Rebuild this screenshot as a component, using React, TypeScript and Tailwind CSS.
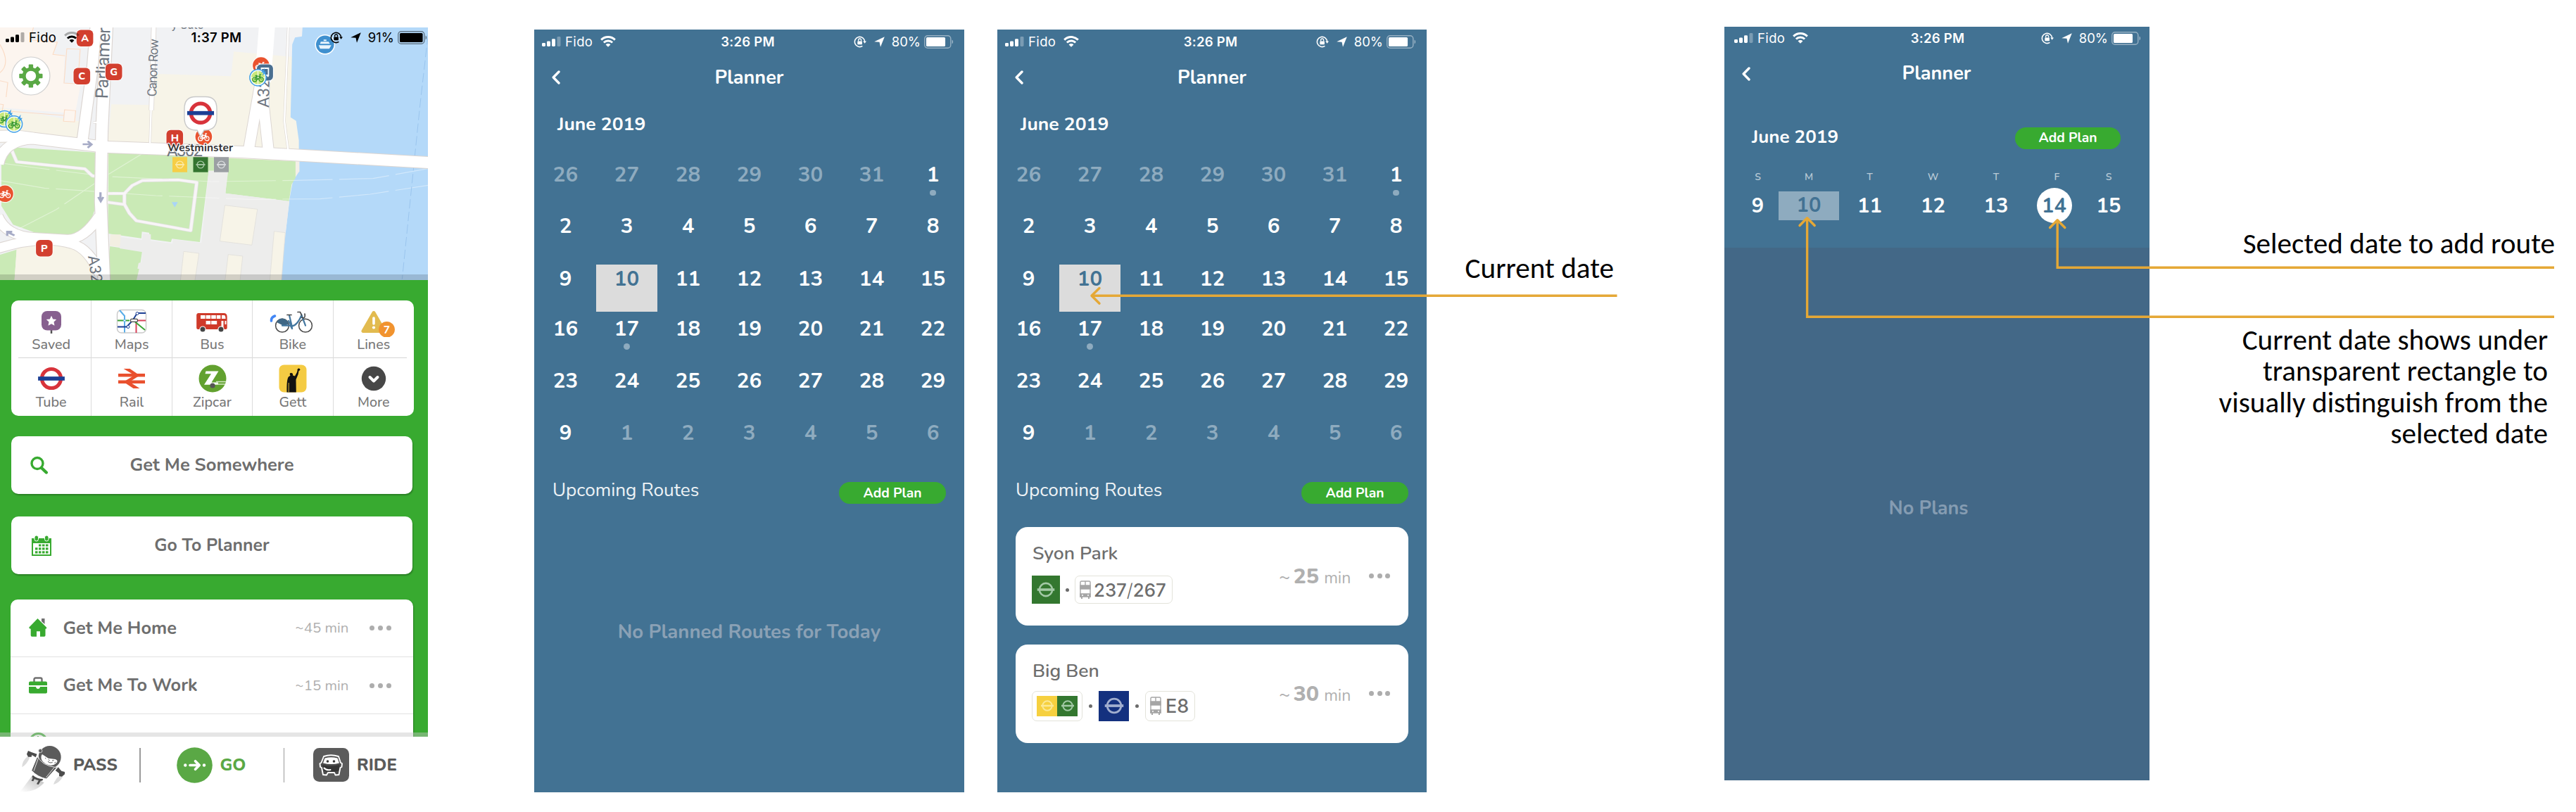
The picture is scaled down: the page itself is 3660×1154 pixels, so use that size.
import type { ReactNode } from 'react';

/* ---------- status bar ---------- */

function Signal() {
  return (
    <svg className="h-[14px] w-[27px]" viewBox="0 0 27 14" fill="currentColor">
      <rect x="0" y="9" width="5" height="5" rx="1.4" />
      <rect x="7" y="6.5" width="5" height="7.5" rx="1.4" />
      <rect x="14" y="3.2" width="5" height="10.8" rx="1.4" />
      <rect x="21.5" y="0" width="5" height="14" rx="1.4" opacity="0.3" />
    </svg>
  );
}

function Wifi({ weak = false }: { weak?: boolean }) {
  return (
    <svg className="h-[16px] w-[22px]" viewBox="0 0 22 16" fill="none" stroke="currentColor" strokeWidth="3">
      <path d="M1.2 5.6C6.7.2 15.3.2 20.8 5.6" opacity={weak ? 0.3 : 1} />
      <path d="M4.9 9.5c3.4-3.3 8.8-3.3 12.2 0" />
      <path d="M11 15.8 7.6 12.4c1.9-1.8 4.9-1.8 6.8 0Z" fill="currentColor" stroke="none" />
    </svg>
  );
}

function RotationLock() {
  return (
    <svg className="h-[17px] w-[18px]" viewBox="0 0 18 17" fill="none" stroke="currentColor">
      <path d="M15.6 8.2A7.1 7.1 0 1 0 12.4 14.4" strokeWidth="1.6" />
      <path d="M13.2 7.6h4.8l-2.4 3.2z" fill="currentColor" stroke="none" />
      <rect x="5.3" y="7.4" width="6.6" height="4.8" rx="0.6" fill="currentColor" stroke="none" />
      <path d="M6.6 7.6V6a2 2 0 0 1 4 0v1.6" strokeWidth="1.3" />
    </svg>
  );
}

function LocationArrow() {
  return (
    <svg className="h-[15px] w-[15px]" viewBox="0 0 15 15" fill="currentColor">
      <path d="M14.8.2 9 14.8 7.5 7.8.2 7.2z" />
    </svg>
  );
}

function Battery({ level }: { level: number }) {
  return (
    <svg className="h-[19px] w-[42px]" viewBox="0 0 42 19" fill="none">
      <rect x="0.8" y="0.8" width="37" height="17.4" rx="4.2" stroke="currentColor" strokeWidth="1.4" opacity="0.45" />
      <path d="M39.6 6.6c2 .8 2 5 0 5.8z" fill="currentColor" opacity="0.5" />
      <rect x="3" y="3" width={32.6 * level} height="13" rx="1.6" fill="currentColor" />
    </svg>
  );
}

function StatusBar({ time, charge, level, weak, className }: { time: string; charge: string; level: number; weak?: boolean; className: string }) {
  return (
    <div className={'grid w-full grid-cols-[1fr_auto_1fr] items-center font-["Inter",sans-serif] text-[18.5px] leading-none ' + className}>
      <div className="flex items-center">
        <Signal />
        <span className="ml-[6px] mr-[11px] tracking-[0.02em]">Fido</span>
        <Wifi weak={weak} />
      </div>
      <span className="font-semibold tracking-[0.015em]">{time}</span>
      <div className="flex items-center justify-end">
        <RotationLock />
        <span className="ml-[11px] mr-[10px]"><LocationArrow /></span>
        <span className="mr-[5px]">{charge}</span>
        <Battery level={level} />
      </div>
    </div>
  );
}

/* ---------- map ---------- */

function BusStop({ x, y, label }: { x: number; y: number; label: string }) {
  return (
    <g transform={`translate(${x} ${y})`}>
      <rect x="-12.8" y="-12.8" width="25.6" height="25.6" rx="7" fill="#fff" opacity="0.85" />
      <rect x="-11.8" y="-11.8" width="23.6" height="23.6" rx="6" fill="#d23f2f" />
      <text y="4.8" textAnchor="middle" fontFamily="Nunito, Lato, sans-serif" fontWeight="800" fontSize="14.5" fill="#fff">{label}</text>
    </g>
  );
}

function BikeGlyph({ color }: { color: string }) {
  return (
    <g fill="none" stroke={color} strokeWidth="1.2" strokeLinecap="round">
      <circle cx="-4.6" cy="2.6" r="3" />
      <circle cx="4.6" cy="2.6" r="3" />
      <path d="M-4.6 2.6-2.4-2.2 0 2.6h-4.6M0 2.6l3-4.6H-2.2M3-2l1.6 4.6M3-2 2.6-4.4h1.6M-3.6-3h2.4" />
    </g>
  );
}

function BikeDock({ x, y }: { x: number; y: number }) {
  return (
    <g transform={`translate(${x} ${y})`}>
      <circle r="13" fill="#fff" opacity="0.8" />
      <circle r="11.8" fill="#e9532f" />
      <BikeGlyph color="#fff" />
    </g>
  );
}

function EBike({ x, y }: { x: number; y: number }) {
  return (
    <g transform={`translate(${x} ${y})`}>
      <circle r="11.6" fill="#fff" stroke="#3f9fe6" strokeWidth="1.5" />
      <circle r="9.6" fill="#c9e87c" />
      <path d="M-9.6 0h19.2M0-9.6v19.2" stroke="#fff" strokeWidth="1" />
      <BikeGlyph color="#3a9a35" />
      <path d="M9.5-13.5 4.6-7h3.2L6-2.4 12-8.6H8.8z" fill="#3f9fe6" />
    </g>
  );
}

function Roundel({ ring, bar, r = 13.5, w = 5.4 }: { ring: string; bar: string; r?: number; w?: number }) {
  return (
    <g>
      <circle r={r} fill="#fff" stroke={ring} strokeWidth={w} />
      <rect x={-r * 1.4} y={-r * 0.21} width={r * 2.8} height={r * 0.42} fill={bar} />
    </g>
  );
}

function LineRoundel({ tint, scale = 1 }: { tint: string; scale?: number }) {
  return (
    <g transform={`scale(${scale})`} fill="none" stroke={tint}>
      <circle r="9.3" strokeWidth="2.6" />
      <path d="M-12.5 0h25" strokeWidth="3.6" />
    </g>
  );
}

const GEAR_TEETH = [0, 45, 90, 135, 180, 225, 270, 315];

function CityMap() {
  return (
    <svg className="absolute inset-0 h-[359px] w-[608px]" viewBox="0 39 608 359">
      <g transform="translate(0 20) scale(0.39541 0.33333)">
        <rect x="0" y="57" width="1538" height="1080" fill="#f1f2f4" />
        <path d="M400 385 545 388 560 255 830 265 840 160 1090 187 1080 640H380ZM0 400l300 60-20 90H0Z" fill="#f7f4e8" />
        <path d="M0 57h120l-12 50 100 12-16 50 40 10-4 116 62 4-18 112 0 48-40-3 0-35L0 398Z" fill="#fcf5ef" />
        <g fill="none" stroke="#fbdcc6" strokeWidth="3">
          <path d="M120 57 108 110 206 120 190 172 234 178M240 148l48 2-8 148-50-4ZM232 408l40 4-4 48-40-3ZM0 384l12 2-4 26 222 20M0 284l28 8-6 62" />
          <path d="M0 130q20 40 20 70t-20 50" />
        </g>
        <path d="M1087 57h451v1080H1007l33-347 12-75 22-45V540l-10-85-20-15 6-310 10-30 25-5Z" fill="#b4d9f9" />
        <path d="M1063 600h13v70l-24 40Z" fill="#f4efe6" />
        <path d="M45 568 345 590v230l-28 90-50 32-140-10-80-34-42-80V640ZM390 590l672 38v70l-14 28-10 72-228-34 8-96h-68l-32 304-100-14-4 14-76-12-2-28-26-4-2 28-120-20ZM395 990l116 20-16 127H385ZM0 1026l60-22-8 133H0Z" fill="#caeab6" />
        <path d="M60 1000q100-30 210-14l55 60 10 90H52Z" fill="#f7f4e8" />
        <path d="M396 940h38v54l-40-6Z" fill="#f3efe2" />
        <path d="M750 668h70l-10 96 230 34-14 134-40-7-16 212H490l10-50-6-2 4-24 10-2 4-44-82-16 4-48 76 12 4-28 28 4 0 28 78 12 2-18 102 15Z" fill="#ededec" />
        <g fill="#f7f4e8" stroke="#dedcd8" strokeWidth="2">
          <path d="M808 815 925 832 905 985 790 968ZM660 1012l55 8-15 120h-52ZM820 1025l52 7-10 110h-54ZM985 926l40 6-14 210h-42Z" />
        </g>
        <g fill="none" stroke="#e4e2e4" strokeWidth="14" strokeLinejoin="round">
          <path d="M40 575 60 630 305 660 332 690 350 692M385 765h62l28-34 36-21 130-3 66 11-22 205-195-42-25-32-18-38v-46M385 802l62 10" />
        </g>
        <g fill="none" stroke="#f8f5f7" strokeWidth="10" strokeLinejoin="round">
          <path d="M40 575 60 630 305 660 332 690 350 692M385 765h62l28-34 36-21 130-3 66 11-22 205-195-42-25-32-18-38v-46M385 802l62 10" />
        </g>
        <path d="M0 635l140 22 240 35 380 22 300-5 280-8 198-42M0 710l160 32 400 32 340 16 250-2 180-20 208-38M60 920 200 835 380 690 560 560" fill="none" stroke="#fff" strokeOpacity="0.4" strokeWidth="3.5" strokeDasharray="180 24" />
        <path d="M1538 90 1510 380 1445 1130" fill="none" stroke="#98c3ec" strokeWidth="2.5" strokeDasharray="40 14" />
        <g fill="none" stroke="#dcd6d2" strokeLinejoin="round">
          <path d="M-10 522q70-6 130 8l250 36 500 22 680 46" strokeWidth="54" />
          <path d="M384 40 366 500l-4 300 12 340" strokeWidth="48" />
          <path d="M345 40 332 230 296 540" strokeWidth="44" />
          <path d="M120 534Q10 540-6 640M-10 860q30 86 130 92l120 8q60 4 118-100M-10 1000q160-60 270-20 60 20 100 130" strokeWidth="44" />
          <path d="M960 40 935 300 892 590M950 250l-4 130 20 220" strokeWidth="43" />
          <path d="M553 40 544 410" strokeWidth="19" />
          <path d="M543 400l-4 150M1036 57l-14 400 14 130M335 462h20" strokeWidth="9" />
        </g>
        <g fill="none" stroke="#fff" strokeLinejoin="round">
          <path d="M-10 522q70-6 130 8l250 36 500 22 680 46" strokeWidth="48" />
          <path d="M384 40 366 500l-4 300 12 340" strokeWidth="42" />
          <path d="M345 40 332 230 296 540" strokeWidth="38" />
          <path d="M120 534Q10 540-6 640M-10 860q30 86 130 92l120 8q60 4 118-100M-10 1000q160-60 270-20 60 20 100 130" strokeWidth="38" />
          <path d="M960 40 935 300 892 590M950 250l-4 130 20 220" strokeWidth="38" />
          <path d="M960 40 944 290" strokeWidth="58" />
          <path d="M553 40 544 410" strokeWidth="15" />
          <path d="M543 400l-4 150M1036 57l-14 400 14 130M335 462h20" strokeWidth="6" />
        </g>
        <path d="M617 802h22l-11 22Z" fill="#a9d4f7" />
        <g fill="none" stroke="#a6abc6" strokeWidth="8">
          <path d="M297 555h28M315 542l14 14-14 14M361 760v32M353 780l9 18 9-18M52 944 28 930M26 946v-18h18" />
        </g>
      </g>

      {/* street names */}
      <g fontFamily="Roboto, sans-serif" fill="#6f7680">
        <text transform="translate(153 140.500) rotate(-88)" fontSize="25" textLength="101">Parliamer</text>
        <text transform="translate(222 137.500) rotate(-88)" fontSize="18" textLength="82">Canon Row</text>
        <text transform="translate(382 153) rotate(-89)" fontSize="23">A32</text>
        <text transform="translate(125 364) rotate(82)" fontSize="22">A32</text>
        <text x="237" y="222" fontSize="24" textLength="51">A302</text>
      </g>
      <text x="244" y="41" fontFamily="Roboto, sans-serif" fontSize="16" fill="#6f7680">y Gate</text>

      {/* markers */}
      <g transform="translate(461.800 63.300)">
        <circle r="14.300" fill="#fff" />
        <circle r="12.800" fill="#3f90cf" />
        <path d="M-9 1h18l-3 5H-7ZM-7-1l1-3H5l2 3ZM-2-5h4v-2h-4Z" fill="#e9f4fc" />
      </g>
      <BikeDock x={370.9} y={93} />
      <g transform="translate(376.400 103)">
        <rect x="-12.500" y="-12.500" width="25" height="25" rx="7" fill="#fff" />
        <rect x="-11.500" y="-11.500" width="23" height="23" rx="6" fill="#4a6f90" />
        <path d="M-5-6h10v10h-10ZM-5 6l2-2M5 6 3 4" fill="none" stroke="#fff" strokeWidth="1.800" />
      </g>
      <EBike x={366.5} y={110.3} />
      <EBike x={6.3} y={169} />
      <EBike x={20} y={176.3} />
      <BikeDock x={7} y={275.3} />
      <BusStop x={120.6} y={54.3} label="A" />
      <BusStop x={116.3} y={108.3} label="C" />
      <BusStop x={161.7} y={102.3} label="G" />
      <BusStop x={62.9} y={352.7} label="P" />
      <BusStop x={248.3} y={196.5} label="H" />
      <BikeDock x={289.4} y={194.3} />

      {/* station pin */}
      <path d="M278 137.500h14q16 0 16 17v13q0 17-16 17.500h-2l-5 9-5-9h-2q-16-.5-16-17.500v-13q0-17 16-17Z" fill="#fff" stroke="#c9c9c9" strokeWidth="1.400" />
      <g transform="translate(285 160.700)"><Roundel ring="#d8333b" bar="#1c3f94" r={13.6} /></g>
      <text x="284.500" y="215.300" textAnchor="middle" textLength="93" fontFamily="Nunito, Lato, sans-serif" fontWeight="700" fontSize="15.500" fill="#333" stroke="#fff" strokeWidth="2.500" paintOrder="stroke">Westminster</text>
      <g transform="translate(255.500 234)"><rect x="-10.500" y="-10.700" width="21" height="21.400" fill="#f6ce46" /><LineRoundel tint="#fbe9a8" scale={0.52} /></g>
      <g transform="translate(285 234)"><rect x="-10.500" y="-10.700" width="21" height="21.400" fill="#33742f" /><LineRoundel tint="#a5c8a3" scale={0.52} /></g>
      <g transform="translate(314.500 234)"><rect x="-10.500" y="-10.700" width="21" height="21.400" fill="#9b9fa3" /><LineRoundel tint="#d9dbdd" scale={0.52} /></g>

      {/* settings */}
      <g transform="translate(43.900 108)">
        <circle r="27" fill="#fff" stroke="#cfcfcf" strokeWidth="1.200" />
        {GEAR_TEETH.map((a) => (
          <rect key={a} x="-3.200" y="-16.600" width="6.400" height="7" rx="1" fill="#5aa845" transform={`rotate(${a})`} />
        ))}
        <circle r="9.800" fill="#fff" stroke="#5aa845" strokeWidth="5" />
      </g>
    </svg>
  );
}

/* ---------- home screen ---------- */

function SavedIcon() {
  return (
    <g>
      <path d="M0 13v5" stroke="#555" strokeWidth="2.500" />
      <rect x="-14" y="-14" width="28" height="27.500" rx="8" fill="#87608f" />
      <path d="M0-7.200 2.200-2.500 7.200-1.900 3.500 1.600 4.500 6.700 0 4.200-4.500 6.700-3.500 1.600-7.200-1.900-2.200-2.500Z" fill="#fff" />
    </g>
  );
}

function MapsIcon() {
  return (
    <g fill="none">
      <rect x="-20.500" y="-15.500" width="41" height="32.500" rx="6" fill="#fff" stroke="#c9c9c9" strokeWidth="1.400" />
      <g strokeWidth="2">
        <path d="M-20-.5H-3" stroke="#3ba336" />
        <path d="M5-.5h15M6.500 1v16" stroke="#d8435a" />
        <path d="M5 1.500 19 13" stroke="#3ba336" />
        <path d="M-17-15-10-7V16.500" stroke="#5aaee8" />
        <path d="M-20 8.500h13L1 0l7-11h12" stroke="#1c3f94" />
      </g>
      <rect x="-1.500" y="-2.600" width="10" height="4" rx="1.500" fill="#fff" stroke="#444" strokeWidth="1.200" />
      <circle cx="8" cy="-10.500" r="2" fill="#fff" stroke="#1c3f94" />
      <circle cx="-5" cy="8.500" r="2" fill="#fff" stroke="#1c3f94" />
      <circle cx="-10" cy="-.5" r="1.600" fill="#fff" stroke="#5aaee8" />
    </g>
  );
}

function BusIcon() {
  return (
    <g>
      <path d="M-19.500-11H17q4.500 0 4.700 5V10q0 2-2 2h-39.500q-2 0-2-2V-8.500Q-21.500-11-19.500-11Z" fill="#cf3a2a" />
      <g fill="#fff">
        <rect x="-16" y="-8" width="6.600" height="5" /><rect x="-8.400" y="-8" width="6.600" height="5" />
        <rect x="-.8" y="-8" width="6.600" height="5" /><rect x="6.800" y="-8" width="5.600" height="5" />
        <rect x="-8.400" y="0" width="6.600" height="5" /><rect x="-.8" y="0" width="8" height="5" />
        <path d="M14-8h4q1.500 1 1.500 5H14ZM13.500 0h3v9h-3ZM18.500 0h2v5h-2Z" />
      </g>
      <circle cx="-13" cy="12" r="4.600" fill="#fff" /><circle cx="13" cy="12" r="4.600" fill="#fff" />
      <circle cx="-13" cy="12" r="3.500" fill="#444" /><circle cx="13" cy="12" r="3.500" fill="#444" />
    </g>
  );
}

function BikeIcon() {
  return (
    <g fill="none" strokeLinecap="round">
      <path d="M-30.500 0Q-31-5-25.500-7" stroke="#4287f5" strokeWidth="3.600" />
      <circle cx="-15" cy="6.700" r="9.400" stroke="#4a4a4a" strokeWidth="1.500" />
      <circle cx="18" cy="6.700" r="9.400" stroke="#4a4a4a" strokeWidth="1.500" />
      <path d="M-23 2q3-6 9-5.500Q-7-2.500-6 5l-7 2Z" fill="#3f6785" />
      <g stroke="#43779f" strokeWidth="2.200">
        <path d="M-15 6.700H-1.500L-5-8M-1.500 7.500Q6 7 12.500-8L18 6.700M-6 0 -1 9" />
      </g>
      <path d="M-8-8.500h6M12.500-8 10.500-12.500H7M17-10q1 5-1.500 6l-3-1" stroke="#4a4a4a" strokeWidth="1.700" />
      <path d="M-3 7-1 11" stroke="#43779f" strokeWidth="2.500" />
    </g>
  );
}

function LinesIcon() {
  return (
    <g>
      <path d="M0-11.500-15 14.500H15Z" fill="#e2bb4f" stroke="#e2bb4f" strokeWidth="5" strokeLinejoin="round" />
      <path d="M0-4v8" stroke="#fff" strokeWidth="3.600" strokeLinecap="round" />
      <circle cx="0" cy="9.500" r="2.100" fill="#fff" />
      <circle cx="18.500" cy="12.300" r="11.400" fill="#f1932f" />
      <text x="18.500" y="17.500" textAnchor="middle" fontFamily="Nunito, Lato, sans-serif" fontWeight="700" fontSize="15.500" fill="#fff">7</text>
    </g>
  );
}

function RailIcon() {
  return (
    <g stroke="#e9502e" fill="none">
      <path d="M-19-4.800H19M-19 4.800H19" strokeWidth="4.600" />
      <path d="M-11.500-14h9L11.500-4.500-3 4.800 11.500 14h-9L-11.500 4.800 4-4.800Z" fill="#e9502e" stroke="none" />
    </g>
  );
}

function ZipcarIcon() {
  return (
    <g>
      <circle cx="1" r="19.500" fill="#62a12f" />
      <path d="M-8.500-10.500H9.500L-.500 5.500H9V8.800H-11L-1-6.700H-9.500Z" fill="#fff" />
      <path d="M6 4.500h14M6 8h13" stroke="#d4e8c4" strokeWidth="1.400" />
      <circle cx="1" cy="10" r="3.600" fill="#555" />
    </g>
  );
}

function GettIcon() {
  return (
    <g>
      <rect x="-19.500" y="-19.500" width="39" height="39" rx="7" fill="#f4cb43" />
      <path d="M-8.500 19.500Q-9 1-6-2.500l2.500-1.800Q-5.500-7.700-2.500-8 .8-8 0-4.500L3-3.500 6-9l1-4.500 2 .3Q8.500-6 4.500 1.500L4.800 19.500Z" fill="#111" />
      <circle cx="8.500" cy="-12.800" r="1.800" fill="#111" />
      <path d="M-5.800 19.500V6" stroke="#f4cb43" strokeWidth="0.900" />
    </g>
  );
}

function MoreIcon() {
  return (
    <g>
      <circle r="17.200" fill="#474747" />
      <path d="M-5.500-2 0 3.500 5.500-2" fill="none" stroke="#fff" strokeWidth="4" strokeLinecap="round" strokeLinejoin="round" />
    </g>
  );
}

const SERVICES: { label: string; icon: ReactNode }[] = [
  { label: 'Saved', icon: <SavedIcon /> },
  { label: 'Maps', icon: <MapsIcon /> },
  { label: 'Bus', icon: <BusIcon /> },
  { label: 'Bike', icon: <BikeIcon /> },
  { label: 'Lines', icon: <LinesIcon /> },
  { label: 'Tube', icon: <Roundel ring="#d8333b" bar="#1c3f94" r={13.5} w={5.2} /> },
  { label: 'Rail', icon: <RailIcon /> },
  { label: 'Zipcar', icon: <ZipcarIcon /> },
  { label: 'Gett', icon: <GettIcon /> },
  { label: 'More', icon: <MoreIcon /> },
];

function Services({ items }: { items: typeof SERVICES }) {
  return (
    <div className="grid h-[82px] grid-cols-5 divide-x divide-[#dcdcdc]">
      {items.map((s) => (
        <div key={s.label} className="flex flex-col items-center pt-[6px]">
          <svg className="h-[46px] w-[80px] shrink-0" viewBox="-40 -23 80 46">{s.icon}</svg>
          <span className="-mt-[1px] text-[19.800px] font-medium leading-[24px] text-[#777]">{s.label}</span>
        </div>
      ))}
    </div>
  );
}

function Dots({ className }: { className: string }) {
  return (
    <div className={'flex items-center ' + className}>
      <i className="h-[7px] w-[7px] rounded-full bg-[#adadad]" />
      <i className="h-[7px] w-[7px] rounded-full bg-[#adadad]" />
      <i className="h-[7px] w-[7px] rounded-full bg-[#adadad]" />
    </div>
  );
}

function SearchIcon() {
  return (
    <svg className="h-[26px] w-[26px]" viewBox="0 0 26 26" fill="none" stroke="#38aa30" strokeLinecap="round">
      <circle cx="10" cy="10.500" r="8" strokeWidth="3.400" />
      <path d="M16 17l6.800 6.500" strokeWidth="4.400" />
    </svg>
  );
}

function CalendarIcon() {
  return (
    <svg className="h-[29px] w-[28px]" viewBox="0 0 28 29">
      <path d="M0 4h28v25H0Z" fill="#38aa30" />
      <path d="M2 11h24v16H2Z" fill="#fff" />
      <rect x="4" y="0" width="5.500" height="8" rx="2.700" fill="#38aa30" stroke="#fff" />
      <rect x="18.500" y="0" width="5.500" height="8" rx="2.700" fill="#38aa30" stroke="#fff" />
      <path d="M10 14h13.500M5 18.800h18.500M5 23.800h18.500" stroke="#38aa30" strokeWidth="3.200" strokeDasharray="3.500 1.500" />
    </svg>
  );
}

function HomeIcon() {
  return (
    <svg className="h-[26px] w-[26px]" viewBox="0 0 26 26">
      <path d="M18 0h4.500v8L18 4Z" fill="#707070" />
      <path d="M12.500 0 25 12.500q.8 2-1.500 2.200V24q0 1.700-1.700 1.700H16v-7.500h-5v7.500H4.500Q2.700 25.700 2.700 24v-9.300Q-.5 14.500.6 12.300Z" fill="#38aa30" />
    </svg>
  );
}

function WorkIcon() {
  return (
    <svg className="h-[24px] w-[26px]" viewBox="0 0 26 24">
      <path d="M7.500 7V3.500q0-2 2-2h7q2 0 2 2V7" fill="none" stroke="#707070" strokeWidth="2.400" />
      <path d="M2 6.500h22q2 0 2 2V12H0V8.500q0-2 2-2ZM0 14h10q.5 3 3 3t3-3h10v7.500q0 2-2 2H2q-2 0-2-2Z" fill="#38aa30" />
    </svg>
  );
}

function RobotIcon() {
  return (
    <svg className="h-[70px] w-[68px]" viewBox="24 52 204 210">
      <defs>
        <linearGradient id="trail" x1="1" y1="0" x2="0" y2="1">
          <stop offset="0.200" stopColor="#c9c9c9" />
          <stop offset="1" stopColor="#fff" />
        </linearGradient>
      </defs>
      <path d="M76 190 128 218Q90 262 26 256Z" fill="url(#trail)" />
      <path d="M58 106Q34 124 34 152 56 138 66 112ZM196 188Q176 200 168 226 194 218 208 192Z" fill="#dcdcdc" />
      <path d="M98 96 74 88 60 82 54 96 60 108 74 108 76 100 92 110ZM188 152l14 16 14 4 0 10-12 10-12-2 0-12-16-12Z" fill="#4c4c4c" />
      <path d="M98 108 74 166Q100 194 138 202L184 152Z" fill="#5b5b5b" stroke="#fff" strokeWidth="3" />
      <path d="M104 112 84 168M172 152 136 196" stroke="#fff" strokeWidth="2.500" />
      <path d="M82 192l-8 18 8 2 8-16M108 202l-12 22 8 2 12-20" fill="#4c4c4c" />
      <path d="M80 186q18 16 44 16l-4 8q-28 0-44-16Z" fill="#4c4c4c" />
      <circle cx="152" cy="109" r="48" fill="#5b5b5b" />
      <path d="M102 92q14 48 86 56" fill="none" stroke="#fff" strokeWidth="2.500" transform="translate(-4 6)" />
      <circle cx="112" cy="82" r="8" fill="#5b5b5b" stroke="#fff" strokeWidth="2" />
      <path d="M120 97 146 114 176 118Q192 124 178 136 166 148 146 142 120 134 116 116 114 102 120 97Z" fill="#fff" />
      <path d="M132 112l4 4M146 120l6 3M162 124l8-1M172 134l6-4M144 128q8 8 20 4" stroke="#5b5b5b" strokeWidth="3" fill="none" />
    </svg>
  );
}

function RideIcon() {
  return (
    <svg className="h-[48px] w-[51px]" viewBox="0 0 51 48">
      <rect width="51" height="48" rx="8.500" fill="#5b5b5b" />
      <path d="M15 12q10-3.500 21 0l3 9 2 1-.5 5-2 1-1 5-1 5-5 .500-1.500-3.500h-9L19 38.500l-5-.5-1-5-1-5-2-1-.5-5 2-1Z" fill="#4b4b4b" stroke="#fff" strokeWidth="1.900" strokeLinejoin="round" />
      <path d="M16.500 14.500q9-2.500 18 0l2.500 7q-11 3-23 0Z" fill="#fff" />
      <circle cx="20.500" cy="19" r="1.800" fill="#3a3a3a" /><circle cx="29.500" cy="19" r="1.800" fill="#3a3a3a" />
      <path d="M13 24q12 3.500 24.500 0l-1.500 8.500q-10 3-21 0Z" fill="#353535" />
      <path d="M15.500 28.500q3 3.500 9 2.500" fill="none" stroke="#fff" strokeWidth="2" strokeLinecap="round" />
    </svg>
  );
}

function GoIcon() {
  return (
    <svg className="h-[51px] w-[51px]" viewBox="0 0 51 51">
      <circle cx="25.500" cy="25.500" r="25.300" fill="#5aa845" />
      <g fill="none" stroke="#fff" strokeWidth="3.700" strokeLinecap="round" strokeLinejoin="round">
        <path d="M19 25.500h12M26.500 19.800l5.700 5.700-5.700 5.700" />
      </g>
      <circle cx="12.300" cy="25.500" r="2.200" fill="#fff" /><circle cx="39" cy="25.500" r="2.200" fill="#fff" />
    </svg>
  );
}

function Shortcut({ icon, label, time }: { icon: ReactNode; label: string; time: string }) {
  return (
    <div className="flex h-[81.700px] items-center border-b border-[#e2e2e2] pl-[26px] pr-[31px]">
      <span className="w-[49px]">{icon}</span>
      <span className="flex-1 text-[25.300px] font-bold leading-none text-[#6e6e6e]">{label}</span>
      <span className="mr-[29px] text-[20.500px] leading-none text-[#b0b0b0]">{time}</span>
      <Dots className="gap-[5px]" />
    </div>
  );
}

function HomeScreen() {
  return (
    <div className="mt-[39px] w-[608px] shrink-0 font-['Nunito','Lato',sans-serif]">
      <div className="relative h-[359px] overflow-hidden">
        <CityMap />
        <div className="relative">
          <StatusBar time="1:37 PM" charge="91%" level={1} weak className="h-[28px] pl-[8px] pr-[1px] text-black" />
        </div>
        <div className="absolute inset-x-0 bottom-0 h-[8px] bg-black/15" />
      </div>
      <div className="relative h-[649px] overflow-hidden bg-[#38aa30] pt-[29px]">
        <div className="ml-[16px] w-[572px] rounded-[10px] bg-white">
          <Services items={SERVICES.slice(0, 5)} />
          <div className="mx-[10px] -mt-px h-px bg-[#d6d6d6]" />
          <Services items={SERVICES.slice(5)} />
        </div>
        <div className="ml-[16px] mt-[29px] flex h-[82px] w-[570px] items-center rounded-[10px] bg-white pl-[27px] shadow-[1px_2px_2px_rgba(0,0,0,0.25)]">
          <SearchIcon />
          <span className="mr-[53px] flex-1 text-center text-[25.500px] font-bold leading-none text-[#6e6e6e]">Get Me Somewhere</span>
        </div>
        <div className="ml-[16px] mt-[32px] flex h-[82px] w-[570px] items-center rounded-[10px] bg-white pl-[29px] shadow-[1px_2px_2px_rgba(0,0,0,0.25)]">
          <CalendarIcon />
          <span className="mr-[57px] flex-1 text-center text-[24.800px] font-bold leading-none text-[#6e6e6e]">Go To Planner</span>
        </div>
        <div className="ml-[14.500px] mt-[36px] h-[240px] w-[572px] rounded-[10px] bg-white shadow-[1px_1px_2px_rgba(0,0,0,0.25)]">
          <Shortcut icon={<HomeIcon />} label="Get Me Home" time="~45 min" />
          <Shortcut icon={<WorkIcon />} label="Get Me To Work" time="~15 min" />
          <div className="pl-[26px] pt-[26px]">
            <div className="flex h-[27px] w-[27px] justify-center rounded-full border-[3px] border-[#38aa30]">
              <i className="mt-[2px] h-[5px] w-[2px] bg-[#38aa30]" />
            </div>
          </div>
        </div>
        <div className="absolute inset-x-0 bottom-0 h-[6px] bg-[#c5c5c5]/45" />
      </div>
      <div className="flex h-[80px] items-center bg-white text-[24px] font-extrabold leading-none text-[#5b5b5b]">
        <div className="flex h-full w-[198px] items-center pl-[28px]">
          <span className="mt-[10px]"><RobotIcon /></span>
          <span className="ml-[8px]">PASS</span>
        </div>
        <i className="h-[49px] w-[1.500px] bg-[#9a9a9a]" />
        <div className="flex w-[203px] items-center pl-[51px]">
          <GoIcon />
          <span className="ml-[11px] text-[#5aa845]">GO</span>
        </div>
        <i className="h-[49px] w-[1.500px] bg-[#9a9a9a]" />
        <div className="flex items-center pl-[41px]">
          <RideIcon />
          <span className="ml-[11px]">RIDE</span>
        </div>
      </div>
    </div>
  );
}

/* ---------- planner ---------- */

function TitleRow({ className }: { className: string }) {
  return (
    <div className={'grid grid-cols-[1fr_auto_1fr] items-center ' + className}>
      <svg className="ml-[25px] h-[20px] w-[12px]" viewBox="0 0 12 20" fill="none" stroke="#fff" strokeWidth="3.400" strokeLinecap="round" strokeLinejoin="round">
        <path d="M10 2 2.200 10 10 18" />
      </svg>
      <span className="text-[27px] font-bold leading-none">Planner</span>
    </div>
  );
}

function AddPlan({ className }: { className: string }) {
  return (
    <button className={'h-[31px] rounded-full bg-[#38aa30] pb-[1px] text-[19.300px] font-bold leading-none text-white ' + className}>Add Plan</button>
  );
}

type Day = { n: number; dim?: boolean; dot?: boolean; today?: boolean };

const dim = (n: number): Day => ({ n, dim: true });
const day = (n: number): Day => ({ n });

const WEEKS: { height: string; days: Day[] }[] = [
  { height: 'h-[73px]', days: [...[26, 27, 28, 29, 30, 31].map(dim), { n: 1, dot: true }] },
  { height: 'h-[74.700px]', days: [2, 3, 4, 5, 6, 7, 8].map(day) },
  { height: 'h-[71.300px]', days: [{ n: 9 }, { n: 10, today: true }, ...[11, 12, 13, 14, 15].map(day)] },
  { height: 'h-[73.700px]', days: [{ n: 16 }, { n: 17, dot: true }, ...[18, 19, 20, 21, 22].map(day)] },
  { height: 'h-[74.800px]', days: [23, 24, 25, 26, 27, 28, 29].map(day) },
  { height: 'h-[73.500px]', days: [{ n: 9 }, ...[1, 2, 3, 4, 5, 6].map(dim)] },
];

function MonthScreen({ children, className }: { children: ReactNode; className: string }) {
  return (
    <div className={'mt-[42px] flex h-[1084px] shrink-0 flex-col bg-[#427293] font-["Nunito","Lato",sans-serif] text-white ' + className}>
      <StatusBar time="3:26 PM" charge="80%" level={0.83} className="h-[34px] pl-[11px] pr-[15px] text-white" />
      <TitleRow className="h-[68px]" />
      <div className="flex h-[84px] items-start pl-[33px] pt-[16px]">
        <span className="text-[26.500px] font-bold leading-[32px]">June 2019</span>
      </div>
      {WEEKS.map((w, i) => (
        <div key={i} className={'grid shrink-0 grid-cols-[repeat(7,87px)] pl-[1px] ' + w.height}>
          {w.days.map((d, j) => (
            <div key={j} className={'flex flex-col items-center ' + (d.today ? 'h-[67.500px] bg-[#dcdcdc] text-[#427293]' : d.dim ? 'text-[#8eabbf]' : '')}>
              <span className="text-[29.500px] font-bold leading-[40px]">{d.n}</span>
              {d.dot && <i className="mt-[1.500px] h-[8.400px] w-[8.400px] rounded-full bg-[#8eabbf]" />}
            </div>
          ))}
        </div>
      ))}
      <div className="flex h-[64px] shrink-0 items-center justify-between pl-[26px] pr-[26px]">
        <span className="pb-[7px] text-[26.200px] font-normal leading-none text-[#eef3f6]">Upcoming Routes</span>
        <AddPlan className="w-[152px]" />
      </div>
      {children}
    </div>
  );
}

function LineTile({ size, bg, tint, scale }: { size: string; bg: string; tint: string; scale: number }) {
  return (
    <div className={'flex shrink-0 items-center justify-center ' + size + ' ' + bg}>
      <svg className="h-[26px] w-[28px]" viewBox="-14 -13 28 26"><LineRoundel tint={tint} scale={scale} /></svg>
    </div>
  );
}

function BusFront() {
  return (
    <svg className="h-[26px] w-[16px]" viewBox="0 0 16 26" fill="none" stroke="#a5a5a5" strokeWidth="1.400">
      <path d="M1 24V2.500Q1 1 2.500 1h11Q15 1 15 2.500V24M8 1v6" />
      <rect x="1" y="7" width="14" height="5" fill="#a5a5a5" />
      <path d="M1 19h14v4H1Z" fill="#a5a5a5" />
      <path d="M3 23v3M13 23v3" strokeWidth="2" />
      <path d="M3 21h2M11 21h2" stroke="#fff" />
    </svg>
  );
}

function Bullet({ className }: { className: string }) {
  return <i className={'h-[5px] w-[5px] shrink-0 rounded-full bg-[#6b6b6b] ' + className} />;
}

function RouteCard({ title, minutes, children }: { title: string; minutes: number; children: ReactNode }) {
  return (
    <div className="flex h-[140px] items-center justify-between rounded-[17px] bg-white pl-[23px] pr-[26px]">
      <div className="h-full pt-[19px]">
        <div className="pl-[1px] text-[26.500px] font-semibold leading-[36px] text-[#6e6e6e]">{title}</div>
        {children}
      </div>
      <div className="flex items-center text-[#b0b0b0]">
        <div className="flex items-baseline leading-none">
          <span className="mr-[4px] text-[28px]">~</span>
          <span className="mr-[7px] text-[30.500px] font-extrabold">{minutes}</span>
          <span className="text-[23px] font-normal">min</span>
        </div>
        <Dots className="ml-[26px] gap-[4.400px]" />
      </div>
    </div>
  );
}

/* ---------- week view ---------- */

const WEEK: { letter: string; n: number }[] = [
  { letter: 'S', n: 9 },
  { letter: 'M', n: 10 },
  { letter: 'T', n: 11 },
  { letter: 'W', n: 12 },
  { letter: 'T', n: 13 },
  { letter: 'F', n: 14 },
  { letter: 'S', n: 15 },
];

function WeekScreen() {
  return (
    <div className="mt-[38px] flex h-[1071px] w-[604px] shrink-0 flex-col bg-[#427293] font-['Nunito','Lato',sans-serif] text-white">
      <StatusBar time="3:26 PM" charge="80%" level={0.83} className="h-[32px] pl-[14px] pr-[12px] text-white" />
      <TitleRow className="h-[69px] pr-[1px]" />
      <div className="mt-[25px] flex h-[64px] items-center justify-between pl-[39px] pr-[41px]">
        <span className="pb-[3px] text-[26px] font-bold leading-none">June 2019</span>
        <AddPlan className="w-[150px]" />
      </div>
      <div className="ml-[18px] mt-[12px] grid grid-cols-[59px_86px_87px_93px_86px_79px_76px] text-center">
        {WEEK.map((d, i) => (
          <div key={i} className="flex flex-col items-center">
            <span className={'h-[24px] text-[14px] font-semibold leading-[24px] text-[#b9cad6] ' + (d.n === 14 ? 'pl-[8px]' : '')}>{d.letter}</span>
            <div className="flex h-[56px] w-full items-center justify-center text-[29px] font-bold leading-none">
              {d.n === 10 ? (
                <span className="flex h-[41px] w-full items-center justify-center bg-[#8eabbf] pb-[2px] text-[#427293]">10</span>
              ) : d.n === 14 ? (
                <span className="flex h-[50px] w-[50px] items-center justify-center rounded-full bg-white text-[#427293]">14</span>
              ) : (
                <span>{d.n}</span>
              )}
            </div>
          </div>
        ))}
      </div>
      <div className="mt-[32px] flex flex-1 justify-center bg-[#436887] pt-[354px]">
        <span className="mr-[24px] text-[27px] font-bold leading-[34px] text-[#859cb2]">No Plans</span>
      </div>
    </div>
  );
}

/* ---------- callouts ---------- */

function Callouts() {
  return (
    <svg className="pointer-events-none absolute inset-0 h-[1154px] w-[3660px]" viewBox="0 0 3660 1154" fill="none" stroke="#e5a836" strokeWidth="3.400">
      <path d="M2297.500 420.300H1551" />
      <path d="M1562 409.500 1551 420.300 1562 431.200" strokeLinecap="round" strokeLinejoin="round" />
      <path d="M2567.600 310V450.300H3629" />
      <path d="M2557 320.500 2567.600 309.800 2578.200 320.500" strokeLinecap="round" strokeLinejoin="round" />
      <path d="M2923.200 313V380.300H3629" />
      <path d="M2912.600 323.500 2923.200 312.800 2933.800 323.500" strokeLinecap="round" strokeLinejoin="round" />
    </svg>
  );
}

export default function App() {
  return (
    <div className="relative flex h-[1154px] w-[3660px] items-start overflow-hidden bg-white">
      <HomeScreen />

      <MonthScreen className="ml-[151px] w-[611px]">
        <div className="pt-[148px] text-center text-[27.500px] font-bold leading-[34px] text-[#8ba1b5]">No Planned Routes for Today</div>
      </MonthScreen>

      <MonthScreen className="ml-[47px] w-[610px]">
        <div className="mx-[26px] mt-[16px] flex flex-col gap-[27px]">
          <RouteCard title="Syon Park" minutes={25}>
            <div className="mt-[14px] flex h-[41px] items-center">
              <LineTile size="h-[40px] w-[40px]" bg="bg-[#33772f]" tint="#a3c9a6" scale={0.98} />
              <Bullet className="mx-[8px]" />
              <div className="flex h-[40px] items-center rounded-[7px] border border-[#e3e3da] pl-[6px] pr-[8px] font-['Inter',sans-serif]">
                <BusFront />
                <span className="ml-[4px] text-[25.800px] font-medium leading-none text-[#6e6e6e]">237<span className="font-light">/</span>267</span>
              </div>
            </div>
          </RouteCard>
          <RouteCard title="Big Ben" minutes={30}>
            <div className="mt-[11px] flex h-[43px] items-center">
              <div className="flex h-[43px] w-[72px] items-center justify-center rounded-[7px] border border-[#e3e3da]">
                <LineTile size="h-[29px] w-[29px]" bg="bg-[#f6d03f]" tint="#fbe996" scale={0.72} />
                <LineTile size="h-[29px] w-[29px]" bg="bg-[#33772f]" tint="#a3c9a6" scale={0.72} />
              </div>
              <Bullet className="mx-[9px]" />
              <LineTile size="h-[43px] w-[43px]" bg="bg-[#14317f]" tint="#a1aecf" scale={1.06} />
              <Bullet className="mx-[9px]" />
              <div className="flex h-[43px] items-center rounded-[7px] border border-[#e3e3da] pl-[6px] pr-[8px] font-['Inter',sans-serif]">
                <BusFront />
                <span className="ml-[6px] text-[27px] font-medium leading-none text-[#6e6e6e]">E8</span>
              </div>
            </div>
          </RouteCard>
        </div>
      </MonthScreen>

      <div className="w-[423px] shrink-0 pr-[157px] pt-[359px] text-right font-['Carlito','Lato',sans-serif] text-[41.200px] leading-[44.500px] text-black">
        <p>Current date</p>
      </div>

      <WeekScreen />

      <div className="flex-1 pt-[324px] text-right font-['Carlito','Lato',sans-serif] text-[41.200px] leading-[44.500px] text-black">
        <p className="pr-[30px]">Selected date to add route</p>
        <p className="ml-auto mt-[92px] w-[520px] pr-[40px]">Current date shows under transparent rectangle to visually distinguish from the selected date</p>
      </div>

      <Callouts />
    </div>
  );
}
